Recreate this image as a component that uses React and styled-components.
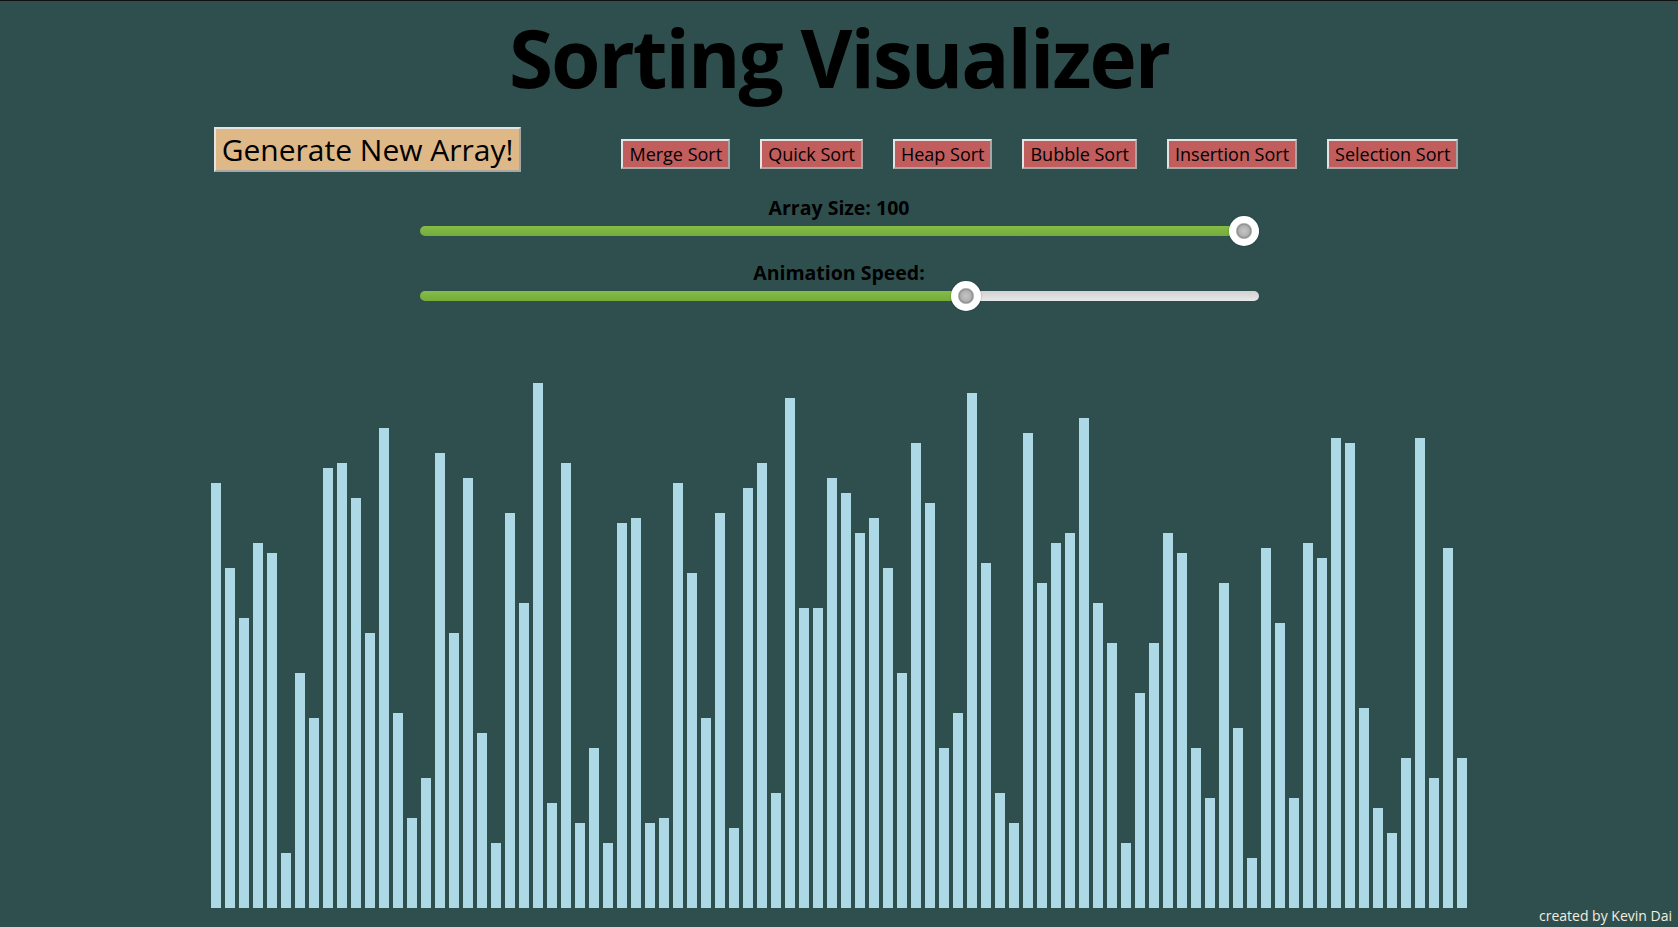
import React, { useState } from 'react';
import styled, { createGlobalStyle } from 'styled-components';

const GlobalStyle = createGlobalStyle`
  html,
  body {
    margin: 0;
    padding: 0;
    background: #2f4f4f;
  }
  body {
    font-family: 'Open Sans', 'Noto Sans', sans-serif;
  }
`;

// heights of the bars currently on screen
const BAR_HEIGHTS = [
  425, 340, 290, 365, 355, 55, 235, 190, 440, 445,
  410, 275, 480, 195, 90, 130, 455, 275, 430, 175,
  65, 395, 305, 525, 105, 445, 85, 160, 65, 385,
  390, 85, 90, 425, 335, 190, 395, 80, 420, 445,
  115, 510, 300, 300, 430, 415, 375, 390, 340, 235,
  465, 405, 160, 195, 515, 345, 115, 85, 475, 325,
  365, 375, 490, 305, 265, 65, 215, 265, 375, 355,
  160, 110, 325, 180, 50, 360, 285, 110, 365, 350,
  470, 465, 200, 100, 75, 150, 470, 130, 360, 150,
];

const SORTS = [
  'Merge Sort',
  'Quick Sort',
  'Heap Sort',
  'Bubble Sort',
  'Insertion Sort',
  'Selection Sort',
];

const fillFor = (value, min, max) => {
  const f = (value - min) / (max - min);
  return `linear-gradient(to bottom, #86bd48, #74ab3a) 0 0 / calc(15px + ${f} * (100% - 30px)) 100% no-repeat, linear-gradient(to bottom, #d2d2d2, #e8e8e8)`;
};

const App = () => {
  const [size, setSize] = useState(100);
  const [speed, setSpeed] = useState(66);

  return (
    <Page>
      <GlobalStyle />
      <Title>Sorting Visualizer</Title>
      <Toolbar>
        <GenerateButton>Generate New Array!</GenerateButton>
        <SortList>
          {SORTS.map((name) => (
            <SortButton key={name}>{name}</SortButton>
          ))}
        </SortList>
      </Toolbar>
      <Controls>
        <SliderLabel>Array Size: {size}</SliderLabel>
        <Range
          type='range'
          min={10}
          max={100}
          value={size}
          onChange={(e) => setSize(Number(e.target.value))}
          style={{ '--fill': fillFor(size, 10, 100) }}
        />
        <SliderLabel $spaced>Animation Speed:</SliderLabel>
        <Range
          type='range'
          min={1}
          max={100}
          value={speed}
          onChange={(e) => setSpeed(Number(e.target.value))}
          style={{ '--fill': fillFor(speed, 1, 100) }}
        />
      </Controls>
      <BarArea>
        {BAR_HEIGHTS.map((h, i) => (
          <Bar key={i} style={{ height: `${h}px` }} />
        ))}
      </BarArea>
      <Footer>created by Kevin Dai</Footer>
    </Page>
  );
};

export default App;

const Page = styled.div`
  height: 100vh;
  box-sizing: border-box;
  border-top: 1px solid #111;
  display: flex;
  flex-direction: column;
  overflow: hidden;
`;

const Title = styled.h1`
  margin: 8px 0 0;
  text-align: center;
  font: 700 80px/96px 'Open Sans', 'Noto Sans', sans-serif;
  letter-spacing: -2px;
  color: #000;
`;

const Toolbar = styled.div`
  display: flex;
  justify-content: center;
  align-items: baseline;
  margin-top: 22px;
  padding-right: 6px;
`;

const buttonBase = `
  border: 2px solid;
  border-color: #e4e4e4 #a6a6a6 #a6a6a6 #e4e4e4;
  padding: 1px 6px;
  color: #000;
  cursor: pointer;
  font-family: 'Open Sans', 'Noto Sans', sans-serif;
`;

const GenerateButton = styled.button`
  ${buttonBase}
  background: #deb887;
  font-size: 30px;
  line-height: 39px;
  margin-right: 100px;
`;

const SortList = styled.div`
  display: flex;
  align-items: baseline;
  gap: 30px;
`;

const SortButton = styled.button`
  ${buttonBase}
  background: #c25d5d;
  font-size: 18px;
  line-height: 24px;
`;

const Controls = styled.div`
  display: flex;
  flex-direction: column;
  align-items: center;
  margin-top: 28px;
`;

const SliderLabel = styled.div`
  font: 700 19.5px/16px 'Open Sans', 'Noto Sans', sans-serif;
  color: #000;
  margin-top: ${(p) => (p.$spaced ? '19px' : '0')};
`;

const Range = styled.input`
  -webkit-appearance: none;
  appearance: none;
  width: 50%;
  height: 30px;
  margin: 0;
  background: transparent;
  outline: none;

  &::-webkit-slider-runnable-track {
    height: 10px;
    border-radius: 5px;
    background: var(--fill);
  }

  &::-webkit-slider-thumb {
    -webkit-appearance: none;
    width: 30px;
    height: 30px;
    margin-top: -10px;
    border-radius: 50%;
    background: radial-gradient(circle, #c4c4c4 0, #b2b2b2 5px, #8e8e8e 7px, #fff 8.5px);
    box-shadow: 0 0 2px rgba(0, 0, 0, 0.35);
    cursor: pointer;
  }
`;

const BarArea = styled.div`
  flex: 1;
  display: flex;
  justify-content: center;
  align-items: flex-end;
  gap: 4px;
`;

const Bar = styled.div`
  width: 10px;
  background: #add8e6;
`;

const Footer = styled.div`
  text-align: right;
  padding: 0 6px 4px 0;
  font-size: 14px;
  line-height: 15px;
  color: #f3eedf;
`;
